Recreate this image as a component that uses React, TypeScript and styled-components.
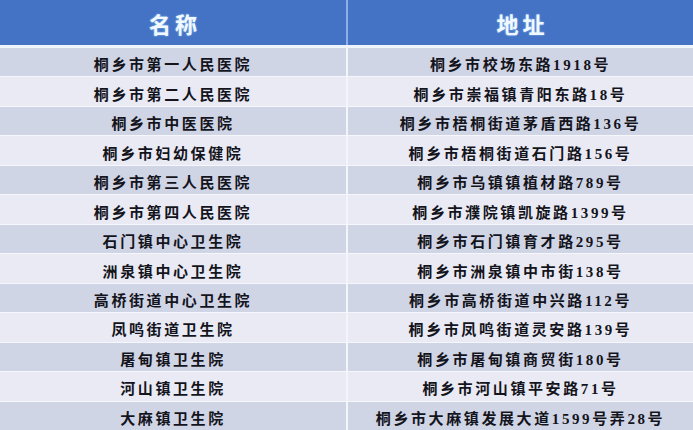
import React from "react";
import styled, { createGlobalStyle } from "styled-components";

const GlobalStyle = createGlobalStyle`
    html, body {
        margin: 0;
        padding: 0;
        background: #ffffff;
    }
`;

const Table = styled.div`
    width: 693px;
    height: 430px;
    display: flex;
    flex-direction: column;
    background: #f4f6fb;
    overflow: hidden;
    font-family: "Liberation Serif", "Noto Sans CJK SC", serif;
`;

const HeaderRow = styled.div`
    display: grid;
    grid-template-columns: 346px 2px 1fr;
    height: 45px;
    background: #4472c4;
    border-bottom: 3px solid #eef6fb;
`;

const HeaderDivider = styled.div`
    background: #8eaee6;
`;

const HeaderCell = styled.div`
    display: flex;
    align-items: center;
    justify-content: center;
    color: #f2f8ff;
    font-size: 22px;
    font-weight: 700;
    letter-spacing: 4px;
    padding-left: 4px;
    text-shadow: 0 0 2px rgba(160, 220, 255, 0.9);
`;

const Row = styled.div<{ $dark: boolean }>`
    flex: 1;
    display: grid;
    grid-template-columns: 346px 2px 1fr;
    background: ${(p) => (p.$dark ? "#d0d5e6" : "#e9eaf4")};
    & + & {
        border-top: 1px solid #f6f7fc;
    }
`;

const RowDivider = styled.div`
    background: #f4f5fa;
`;

const Cell = styled.div`
    display: flex;
    align-items: center;
    justify-content: center;
    padding-top: 3px;
    color: #14141c;
    font-size: 15px;
    font-weight: 700;
    letter-spacing: 2.6px;
    white-space: nowrap;
`;

const rows = [
    ["桐乡市第一人民医院", "桐乡市校场东路1918号"],
    ["桐乡市第二人民医院", "桐乡市崇福镇青阳东路18号"],
    ["桐乡市中医医院", "桐乡市梧桐街道茅盾西路136号"],
    ["桐乡市妇幼保健院", "桐乡市梧桐街道石门路156号"],
    ["桐乡市第三人民医院", "桐乡市乌镇镇植材路789号"],
    ["桐乡市第四人民医院", "桐乡市濮院镇凯旋路1399号"],
    ["石门镇中心卫生院", "桐乡市石门镇育才路295号"],
    ["洲泉镇中心卫生院", "桐乡市洲泉镇中市街138号"],
    ["高桥街道中心卫生院", "桐乡市高桥街道中兴路112号"],
    ["凤鸣街道卫生院", "桐乡市凤鸣街道灵安路139号"],
    ["屠甸镇卫生院", "桐乡市屠甸镇商贸街180号"],
    ["河山镇卫生院", "桐乡市河山镇平安路71号"],
    ["大麻镇卫生院", "桐乡市大麻镇发展大道1599号弄28号"],
];

const App: React.FC = () => {
    return (
        <>
            <GlobalStyle />
            <Table>
                <HeaderRow>
                    <HeaderCell>名称</HeaderCell>
                    <HeaderDivider />
                    <HeaderCell>地址</HeaderCell>
                </HeaderRow>
                {rows.map(([name, address], i) => (
                    <Row key={name} $dark={i % 2 === 0}>
                        <Cell>{name}</Cell>
                        <RowDivider />
                        <Cell>{address}</Cell>
                    </Row>
                ))}
            </Table>
        </>
    );
};

export default App;
